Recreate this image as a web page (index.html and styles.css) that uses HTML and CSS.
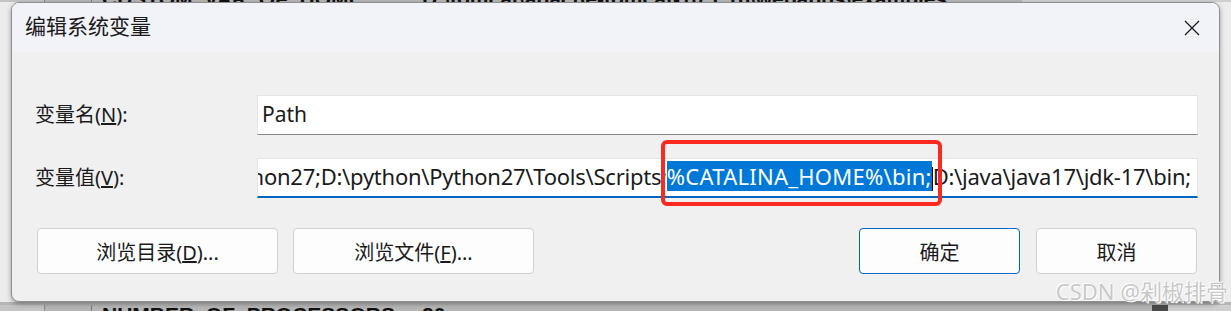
FILE: index.html
```html
<!DOCTYPE html>
<html lang="zh-CN">
<head>
    <meta charset="UTF-8">
    <title>编辑系统变量</title>
    <link rel="stylesheet" href="styles.css">
</head>
<body>
<div class="desktop">

    <!-- window behind the dialog -->
    <div class="bg-list">
        <div class="bg-row bg-row-top">
            <span class="bg-cell bg-cell-a"></span>
            <span class="bg-cell bg-cell-b"></span>
            <span class="bg-cell bg-cell-name">CUSTOM_VAR_OF_HOME</span>
            <span class="bg-cell bg-cell-val">D:\tomcat\apache-tomcat-10.1.16\webapps\examples</span>
            <span class="bg-cell bg-cell-end"></span>
        </div>
        <div class="bg-fill"></div>
        <div class="bg-row bg-row-bottom">
            <span class="bg-cell bg-cell-a"></span>
            <span class="bg-cell bg-cell-b"></span>
            <span class="bg-cell bg-cell-name">NUMBER_OF_PROCESSORS</span>
            <span class="bg-cell bg-cell-val">20</span>
            <span class="bg-cell bg-cell-dark"></span>
            <span class="bg-cell bg-cell-end"></span>
        </div>
    </div>

    <div class="dialog">
        <div class="titlebar">
            <span class="title">编辑系统变量</span>
            <button class="close" aria-label="关闭">
                <svg width="16" height="16" viewBox="0 0 16 16">
                    <path d="M1 1 L15 15 M15 1 L1 15" stroke="#1a1a1a" stroke-width="1.3" fill="none"/>
                </svg>
            </button>
        </div>

        <div class="dialog-body">
            <div class="form">
                <label class="field-label">变量名(<u>N</u>):</label>
                <div class="text-input">Path</div>

                <label class="field-label">变量值(<u>V</u>):</label>
                <div class="text-input focused">
                    <div class="value">D:\python\Python27;D:\python\Python27\Tools\Scripts;<span class="sel">%CATALINA_HOME%\bin;</span><span class="caret"></span>D:\java\java17\jdk-17\bin;</div>
                </div>
            </div>

            <div class="buttons">
                <div class="btn-group">
                    <button class="btn">浏览目录(<u>D</u>)...</button>
                    <button class="btn">浏览文件(<u>F</u>)...</button>
                </div>
                <div class="btn-group btn-group-right">
                    <button class="btn btn-small btn-primary">确定</button>
                    <button class="btn btn-small">取消</button>
                </div>
            </div>
        </div>
    </div>

    <!-- annotation and watermark -->
    <div class="mark"></div>
    <div class="watermark">CSDN @剁椒排骨</div>
</div>
</body>
</html>
```

FILE: styles.css
```css
body {
    margin: 0;
    width: 1231px;
    height: 311px;
    overflow: hidden;
    font-family: "Noto Sans", "Noto Sans CJK SC", sans-serif;
    color: #1a1a1a;
    background: #e9e9e9;
}
.desktop {
    position: relative;
    width: 1231px;
    height: 311px;
}

/* background window */
.bg-list {
    display: flex;
    flex-direction: column;
    height: 100%;
}
.bg-row {
    display: flex;
    overflow: hidden;
    background: #b6b6b6;
    font-family: "Liberation Sans", sans-serif;
    font-size: 21px;
    font-weight: bold;
    color: #111;
    white-space: nowrap;
}
.bg-row-top {
    height: 2px;
    align-items: flex-end;
}
.bg-row-top .bg-cell {
    line-height: 20px;
    margin-bottom: -7px;
}
.bg-row-bottom {
    height: 9px;
    align-items: flex-start;
}
.bg-row-bottom .bg-cell {
    line-height: 20px;
    margin-top: 3px;
}
.bg-cell {
    flex-shrink: 0;
}
.bg-cell-a {
    width: 44px;
    height: 20px;
    border-right: 1px solid #8a8a8a;
    background: #c4c4c4;
}
.bg-cell-b {
    width: 46px;
    height: 20px;
    border-right: 1px solid #7a7a7a;
}
.bg-cell-name {
    width: 310px;
    padding-left: 10px;
}
.bg-cell-val {
    width: 600px;
    padding-left: 10px;
}
.bg-cell-dark {
    width: 16px;
    height: 20px;
    margin-left: 130px;
    background: #4a4a4a;
}
.bg-cell-end {
    flex: 1;
    height: 20px;
    background: #cfcfcf;
}
.bg-fill {
    flex: 1;
    background: #ececec;
}

/* dialog */
.dialog {
    position: absolute;
    left: 11px;
    top: 2px;
    width: 1209px;
    height: 300px;
    box-sizing: border-box;
    border: 1px solid #8f8f8f;
    border-radius: 8px;
    background: #f0f0f0;
    box-shadow: 0 2px 5px rgba(0, 0, 0, 0.35);
    overflow: hidden;
    display: flex;
    flex-direction: column;
}
.titlebar {
    height: 49px;
    flex-shrink: 0;
    background: #f2f3f8;
    display: flex;
    align-items: center;
    justify-content: space-between;
    padding: 0 12px 0 13px;
}
.title {
    font-size: 21px;
    line-height: 26px;
    padding-bottom: 3px;
}
.close {
    width: 30px;
    height: 30px;
    border: none;
    background: transparent;
    padding: 0;
    display: flex;
    align-items: center;
    justify-content: center;
}
.dialog-body {
    flex: 1;
    padding: 43px 21px 0 23px;
}
.form {
    display: grid;
    grid-template-columns: 222px 1fr;
    row-gap: 23px;
    align-items: center;
}
.field-label {
    font-size: 20px;
    line-height: 26px;
}
.text-input {
    height: 40px;
    box-sizing: border-box;
    background: #fff;
    border: 1px solid #e4e4e4;
    border-bottom: 1px solid #878787;
    display: flex;
    align-items: center;
    padding: 0 6px 2px 4px;
    font-size: 21px;
    white-space: nowrap;
    overflow: hidden;
}
.text-input.focused {
    border-bottom: 2px solid #0067c0;
    justify-content: flex-end;
    padding-bottom: 3px;
    font-size: 22px;
    letter-spacing: -0.25px;
}
.value {
    flex-shrink: 0;
}
.sel {
    background: #0078d7;
    color: #fff;
    letter-spacing: 0.25px;
}
.caret {
    display: inline-block;
    width: 1px;
    height: 24px;
    background: #000;
    vertical-align: middle;
}

.buttons {
    display: flex;
    justify-content: space-between;
    margin-top: 30px;
    padding: 0 1px 0 2px;
}
.btn-group {
    display: flex;
    gap: 15px;
}
.btn-group-right {
    gap: 16px;
}
.btn {
    width: 241px;
    height: 46px;
    border: 1px solid #d0d0d0;
    border-radius: 4px;
    background: #fdfdfd;
    font-family: inherit;
    font-size: 20px;
    color: #1a1a1a;
    padding: 0;
}
.btn-small {
    width: 161px;
}
.btn-primary {
    border-color: #0067c0;
}

/* red annotation box over the selected text */
.mark {
    position: absolute;
    left: 661px;
    top: 140px;
    width: 281px;
    height: 66px;
    box-sizing: border-box;
    border: 4px solid #fb2a20;
    border-radius: 6px;
}
.watermark {
    position: absolute;
    right: 3px;
    top: 278px;
    font-size: 22px;
    line-height: 26px;
    color: #c8c8c8;
    text-shadow: 0 0 1px #fff, 1px 1px 0 #fff, -1px -1px 0 #fff;
}
```
